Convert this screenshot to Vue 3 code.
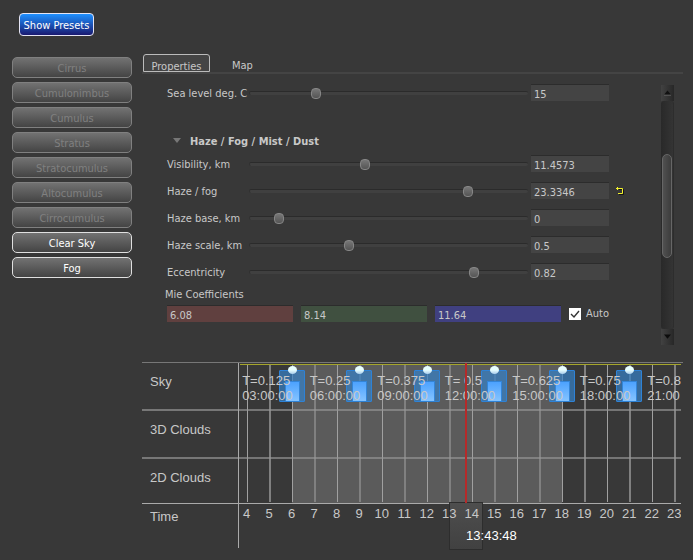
<script setup>
import { ref } from 'vue'

const clouds = [
  { name: 'Cirrus', enabled: false },
  { name: 'Cumulonimbus', enabled: false },
  { name: 'Cumulus', enabled: false },
  { name: 'Stratus', enabled: false },
  { name: 'Stratocumulus', enabled: false },
  { name: 'Altocumulus', enabled: false },
  { name: 'Cirrocumulus', enabled: false },
  { name: 'Clear Sky', enabled: true },
  { name: 'Fog', enabled: true },
]

const temperature = ref({ id: 'sea', label: 'Sea level deg. C', value: '15', pos: 228 })
const haze = ref([
  { id: 'vis', label: 'Visibility, km', value: '11.4573', pos: 410 },
  { id: 'haze', label: 'Haze / fog', value: '23.3346', pos: 795, changed: true },
  { id: 'base', label: 'Haze base, km', value: '0', pos: 90 },
  { id: 'scale', label: 'Haze scale, km', value: '0.5', pos: 351 },
  { id: 'ecc', label: 'Eccentricity', value: '0.82', pos: 817 },
])
const mie = ref([
  { tone: 'red', value: '6.08' },
  { tone: 'green', value: '8.14' },
  { tone: 'blue', value: '11.64' },
])
const auto = ref(true)

// The plot shows a little more than 19 hours, beginning shortly before 04:00.
const startHour = 3.66
const visibleHours = 19.636
const at = (hour) => ((hour - startHour) / visibleHours) * 100 + '%'

const hours = Array.from({ length: 20 }, (_, i) => i + 4)
const keys = [6, 9, 12, 15, 18, 21]
const marks = [
  { t: 'T=0.125', time: '03:00:00' },
  { t: 'T=0.25', time: '06:00:00' },
  { t: 'T=0.375', time: '09:00:00' },
  { t: 'T= 0.5', time: '12:00:00' },
  { t: 'T=0.625', time: '15:00:00' },
  { t: 'T=0.75', time: '18:00:00' },
  { t: 'T=0.8', time: '21:00' },
]
const now = 13.75
</script>

<template>
  <div class="page">
    <header class="top">
      <button class="presets" type="button">Show Presets</button>
    </header>

    <div class="body">
      <nav class="clouds">
        <button
          v-for="c in clouds"
          :key="c.name"
          class="cloud"
          type="button"
          :disabled="!c.enabled"
        >{{ c.name }}</button>
      </nav>

      <main class="main">
        <div class="tabs" role="tablist">
          <button class="tab active" type="button" role="tab" aria-selected="true">Properties</button>
          <button class="tab" type="button" role="tab" aria-selected="false">Map</button>
        </div>

        <section class="panel">
          <div class="props">
            <div class="row">
              <label :for="temperature.id">{{ temperature.label }}</label>
              <input v-model="temperature.pos" class="slider" type="range" min="0" max="1000" :aria-label="temperature.label" />
              <input :id="temperature.id" v-model="temperature.value" class="field" type="text" />
            </div>

            <h2 class="heading">
              <svg class="caret" viewBox="0 0 8 5" aria-hidden="true"><path d="M0 0h8L4 5z" fill="#777" /></svg>
              Haze / Fog / Mist / Dust
            </h2>

            <div v-for="r in haze" :key="r.id" class="row">
              <label :for="r.id">{{ r.label }}</label>
              <input v-model="r.pos" class="slider" type="range" min="0" max="1000" :aria-label="r.label" />
              <input :id="r.id" v-model="r.value" class="field" type="text" />
              <button v-if="r.changed" class="reset" type="button" aria-label="Reset">
                <svg viewBox="0 0 9 9" aria-hidden="true">
                  <path d="M3 3.5h4.5v5H3" stroke="#151515" fill="none" />
                  <path d="M0 2.5h6.5v5H2M1.5 1v3" stroke="#f2f22c" fill="none" />
                </svg>
              </button>
            </div>

            <div class="mie-title">Mie Coefficients</div>
            <div class="mie">
              <input
                v-for="m in mie"
                :key="m.tone"
                v-model="m.value"
                :class="['field', m.tone]"
                type="text"
                :aria-label="'Mie ' + m.tone"
              />
              <label class="auto">
                <span class="tick">
                  <input v-model="auto" type="checkbox" />
                  <svg v-if="auto" viewBox="0 0 12 12" aria-hidden="true"><path d="M2 6l3 3 5-6" stroke="#333" stroke-width="1.4" fill="none" /></svg>
                </span>Auto
              </label>
            </div>
          </div>

          <div class="scroll">
            <button class="arrow" type="button" aria-label="Up">
              <svg viewBox="0 0 8 6" aria-hidden="true"><path d="M4 0l4 5H0z" fill="#111" /><path d="M0 5.5h8" stroke="#666" /></svg>
            </button>
            <div class="rail"><div class="thumb"></div></div>
            <button class="arrow" type="button" aria-label="Down">
              <svg viewBox="0 0 8 6" aria-hidden="true"><path d="M0 0h8L4 5z" fill="#0c0c0c" /></svg>
            </button>
          </div>
        </section>

        <section class="timeline">
          <div class="names">
            <div class="name">Sky</div>
            <div class="name">3D Clouds</div>
            <div class="name">2D Clouds</div>
            <div class="name time">Time</div>
          </div>
          <div class="plot">
            <div class="tracks">
              <div class="day" :style="{ left: at(6), width: (12 / visibleHours) * 100 + '%' }"></div>
              <i v-for="h in hours" :key="h" class="line" :style="{ left: at(h) }"></i>
              <div class="divider first"></div>
              <div class="divider second"></div>
              <div class="sunline"></div>
              <div v-for="k in keys" :key="k" class="key" :style="{ left: at(k) }">
                <span class="ball"></span>
                <span class="core"></span>
              </div>
              <div v-for="(m, i) in marks" :key="m.time" class="mark" :style="{ left: at(3.8 + i * 3) }">
                {{ m.t }}<br />{{ m.time }}
              </div>
            </div>
            <div class="handle" :style="{ left: at(now) }"></div>
            <div class="axis">
              <span v-for="h in hours" :key="h" class="hour" :style="{ left: at(h) }">{{ h }}</span>
            </div>
            <div class="cursor" :style="{ left: at(now) }"></div>
            <div class="clock" :style="{ left: at(now) }">13:43:48</div>
          </div>
        </section>
      </main>
    </div>
  </div>
</template>

<style>
body {
  background: #383838;
}
</style>

<style scoped>
.page {
  box-sizing: border-box;
  padding: 13px 10px 10px 12px;
  font: 11px/14px "DejaVu Sans Condensed", "Noto Sans", sans-serif;
  color: #c8c8c8;
}
.page * {
  box-sizing: border-box;
}
button,
input {
  margin: 0;
  padding: 0;
  border: 0;
  font: inherit;
  color: inherit;
  background: none;
}
.top {
  padding-left: 7px;
}
.presets {
  display: block;
  width: 75px;
  height: 23px;
  padding-top: 2px;
  border: 1px solid #e4e4f4;
  border-radius: 4px;
  background: linear-gradient(#1e90ff, #191970);
  color: #fff;
  white-space: nowrap;
}
.body {
  display: grid;
  grid-template-columns: 120px minmax(0, 1fr);
  gap: 10px;
  padding-top: 18px;
}
.clouds {
  display: flex;
  flex-direction: column;
  gap: 4px;
  padding-top: 3px;
}
.cloud {
  height: 21px;
  padding-top: 2px;
  border: 1px solid #e0e0e0;
  border-radius: 5px;
  background: linear-gradient(#727272, #444);
  color: #fff;
}
.cloud:disabled {
  border-color: #808080;
  color: #808080;
}
.tabs {
  display: flex;
  gap: 12px;
  height: 20px;
  padding-left: 1px;
  border-bottom: 2px solid #444;
}
.tab {
  height: 18px;
  padding: 5px 10px 0;
}
.tab.active {
  width: 67px;
  padding: 5px 0 0;
  border: 1px solid #bbb;
  border-radius: 3px 3px 0 0;
  background: #444;
}
.panel {
  display: flex;
  align-items: flex-start;
  padding: 5px 9px 0 25px;
}
.props {
  flex: 1;
  min-width: 0;
}
.row {
  display: grid;
  grid-template-columns: 82px minmax(0, 1fr) 78px 42px;
  align-items: center;
  height: 27px;
  padding-right: 10px;
}
.row label {
  padding-top: 2px;
  white-space: nowrap;
}
.slider {
  appearance: none;
  width: auto;
  min-width: 0;
  height: 13px;
  margin: 1px 3px 0 0;
}
.slider::-webkit-slider-runnable-track {
  height: 4px;
  border-top: 1px solid #2b2b2b;
  border-left: 1px solid #303030;
  border-radius: 2px;
  background: #404040;
}
.slider::-webkit-slider-thumb {
  appearance: none;
  width: 10px;
  height: 11px;
  margin-top: -4px;
  border: 1px solid #868686;
  border-radius: 4px;
  background: linear-gradient(#777, #555);
}
.field {
  width: 100%;
  min-width: 0;
  height: 17px;
  padding: 2px 3px 0;
  border-top: 1px solid #2c2c2c;
  background: #444;
}
.reset {
  width: 9px;
  height: 9px;
  margin-left: 7px;
}
.reset svg {
  display: block;
}
.heading {
  display: flex;
  align-items: center;
  gap: 9px;
  height: 44px;
  margin: 0;
  padding: 28px 0 0 6px;
  font-size: 11px;
  line-height: 16px;
}
.caret {
  width: 8px;
  height: 5px;
  margin-bottom: 4px;
}
.mie-title {
  margin: 0 0 3px -2px;
  padding-top: 3px;
}
.mie {
  display: flex;
  align-items: center;
  gap: 8px;
  padding-right: 53px;
}
.mie .field {
  flex: 1;
}
.red {
  background: #60403f;
}
.green {
  background: #405040;
}
.blue {
  background: #404080;
}
.auto {
  display: flex;
  align-items: center;
  gap: 5px;
  width: 39px;
}
.tick {
  display: grid;
  flex: none;
  width: 12px;
  height: 12px;
}
.tick > * {
  grid-area: 1 / 1;
  width: 12px;
  height: 12px;
}
.tick input {
  appearance: none;
  background: #fff;
}
.tick svg {
  pointer-events: none;
}
.scroll {
  display: flex;
  flex-direction: column;
  width: 13px;
  height: 260px;
  margin-top: 6px;
}
.arrow {
  flex: none;
  height: 16px;
  background: linear-gradient(90deg, #424242, #272727);
}
.arrow svg {
  display: block;
  width: 7px;
  height: 6px;
  margin: 0 auto;
}
.rail {
  flex: 1;
  padding: 53px 1px 0;
  border: solid #2d2d2d;
  border-width: 0 1px 0 0;
  border-radius: 3px;
  background: linear-gradient(90deg, #292929, #343434);
}
.thumb {
  height: 104px;
  border: 1px solid #666;
  border-radius: 6px;
  background: linear-gradient(90deg, #505050, #3c3c3c);
}
.timeline {
  display: grid;
  grid-template-columns: 96px minmax(0, 1fr);
  margin-top: 17px;
  padding-right: 2px;
  border-top: 1px solid #777;
  font: 13px/15px "Liberation Sans", Arial, sans-serif;
}
.name {
  height: 48px;
  padding: 11px 0 0 8px;
  border-bottom: 2px solid #777;
}
.name:nth-child(3) {
  height: 45px;
  border-bottom: 1px solid #aaa;
}
.name.time {
  height: 44px;
  padding-top: 5px;
  border: 0;
}
.plot {
  position: relative;
  border-left: 1px solid #aaa;
}
.tracks,
.axis {
  position: relative;
  overflow: hidden;
}
.tracks {
  height: 141px;
  border-bottom: 1px solid #aaa;
}
.axis {
  height: 43px;
}
.day,
.line,
.divider,
.sunline,
.key,
.ball,
.core,
.mark,
.hour,
.handle,
.cursor,
.clock {
  position: absolute;
}
.day {
  top: 1px;
  bottom: 0;
  background: #5b5b5b;
}
.line {
  top: 1px;
  bottom: 1px;
  width: 1px;
  background: #a0a0a0;
}
.line:nth-of-type(even) {
  width: 2px;
  background: #808080;
}
.divider {
  left: 0;
  right: 0;
  height: 2px;
  background: rgba(150, 150, 150, 0.65);
}
.divider.first {
  top: 46px;
}
.divider.second {
  top: 94px;
}
.sunline {
  top: 1px;
  left: 1px;
  right: 0;
  height: 1px;
  background: #a5a52a;
}
.key {
  top: 7px;
  width: 26px;
  height: 32px;
  margin-left: -13px;
  border: 1px solid #2e82d6;
  border-radius: 1px;
  background: rgba(54, 130, 200, 0.7);
}
.ball {
  top: -5px;
  left: 8px;
  width: 9px;
  height: 8px;
  border-radius: 50%;
  background: linear-gradient(#e8ffff 50%, #a9cdec);
}
.core {
  top: 10px;
  left: 5px;
  width: 15px;
  height: 20px;
  border: 1px solid #3385d8;
  border-bottom: 0;
  background: linear-gradient(#4ca2ff, #85c4ff);
}
.mark {
  top: 10px;
  white-space: nowrap;
}
.hour {
  top: 2px;
  width: 20px;
  margin-left: -10px;
  text-align: center;
}
.handle {
  top: 139px;
  width: 34px;
  height: 48px;
  margin-left: -17px;
  border: 1px solid #2d2d2d;
  background: linear-gradient(#4e4e4e, #414141);
}
.cursor {
  top: 0;
  width: 2px;
  height: 140px;
  margin-left: -1px;
  background: #b52a2a;
}
.clock {
  top: 165px;
  color: #fff;
}
</style>
